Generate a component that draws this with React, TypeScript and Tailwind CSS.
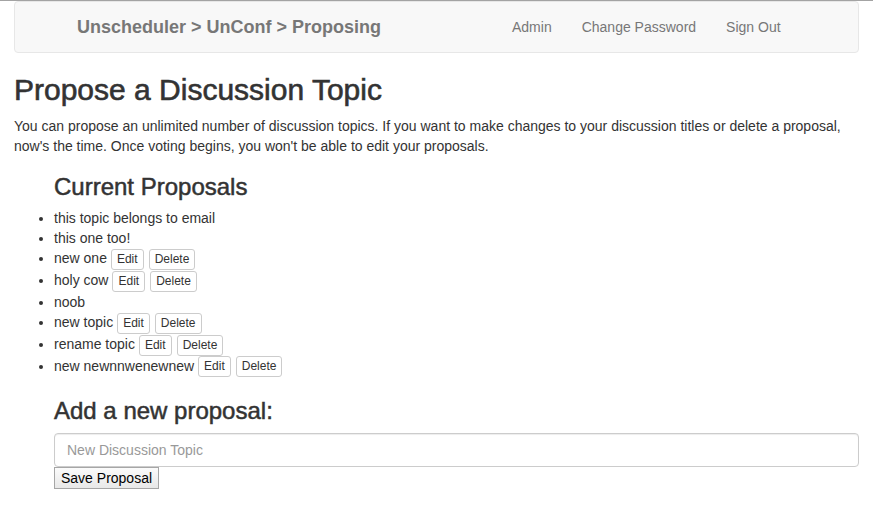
import React from "react";

type Proposal = { title: string; editable: boolean };

const PROPOSALS: Proposal[] = [
  { title: "this topic belongs to email", editable: false },
  { title: "this one too!", editable: false },
  { title: "new one", editable: true },
  { title: "holy cow", editable: true },
  { title: "noob", editable: false },
  { title: "new topic", editable: true },
  { title: "rename topic", editable: true },
  { title: "new newnnwenewnew", editable: true },
];

function SmallButton({ label, className = "" }: { label: string; className?: string }) {
  return (
    <button
      type="button"
      className={`inline-block h-[21px] rounded-[3px] border border-[#ccc] bg-white px-[5px] align-middle text-[12px] leading-[19px] text-[#333] ${className}`}
    >
      {label}
    </button>
  );
}

export default function App() {
  return (
    <div className="min-h-screen bg-white font-['Liberation_Sans',Arial,sans-serif] text-[14px] leading-[20px] text-[#333]">
      <div className="h-px bg-[#a3a3a3]" />
      <div className="px-[14px]">
        <nav className="flex h-[52px] items-center rounded border border-[#e7e7e7] bg-[#f8f8f8] text-[#777]">
          <span className="ml-[62px] w-[435px] text-[18px] font-bold">
            Unscheduler &gt; UnConf &gt; Proposing
          </span>
          <div className="flex gap-[30px] text-[14px]">
            <a>Admin</a>
            <a>Change Password</a>
            <a>Sign Out</a>
          </div>
        </nav>

        <h1 className="mt-[20px] text-[30px] leading-[1.1] font-normal [-webkit-text-stroke:0.6px_#333]">
          Propose a Discussion Topic
        </h1>
        <p className="mt-[10px]">
          You can propose an unlimited number of discussion topics. If you want to make changes to
          your discussion titles or delete a proposal, now's the time. Once voting begins, you
          won't be able to edit your proposals.
        </p>

        <div className="pl-[40px]">
          <h2 className="mt-[18px] text-[24px] leading-[1.1] font-normal [-webkit-text-stroke:0.5px_#333]">
            Current Proposals
          </h2>
          <ul className="mt-[8px] list-disc">
            {PROPOSALS.map((p) => (
              <li key={p.title}>
                {p.title}
                {p.editable && (
                  <>
                    <SmallButton label="Edit" className="ml-1" />
                    <SmallButton label="Delete" className="ml-[5px]" />
                  </>
                )}
              </li>
            ))}
          </ul>

          <h2 className="mt-[21px] text-[24px] leading-[1.1] font-normal [-webkit-text-stroke:0.5px_#333]">
            Add a new proposal:
          </h2>
          <input
            type="text"
            placeholder="New Discussion Topic"
            className="mt-[8px] block h-[34px] w-full rounded border border-[#ccc] px-[12px] text-[14px] text-[#555] shadow-[inset_0_1px_1px_rgba(0,0,0,0.075)] placeholder:text-[#999]"
          />
          <button
            type="button"
            className="block h-[22px] border border-[#a6a6a6] bg-gradient-to-b from-[#fbfbfb] to-[#e8e8e8] px-[6px] text-[14px] leading-[20px] text-black"
          >
            Save Proposal
          </button>
        </div>
      </div>
    </div>
  );
}
